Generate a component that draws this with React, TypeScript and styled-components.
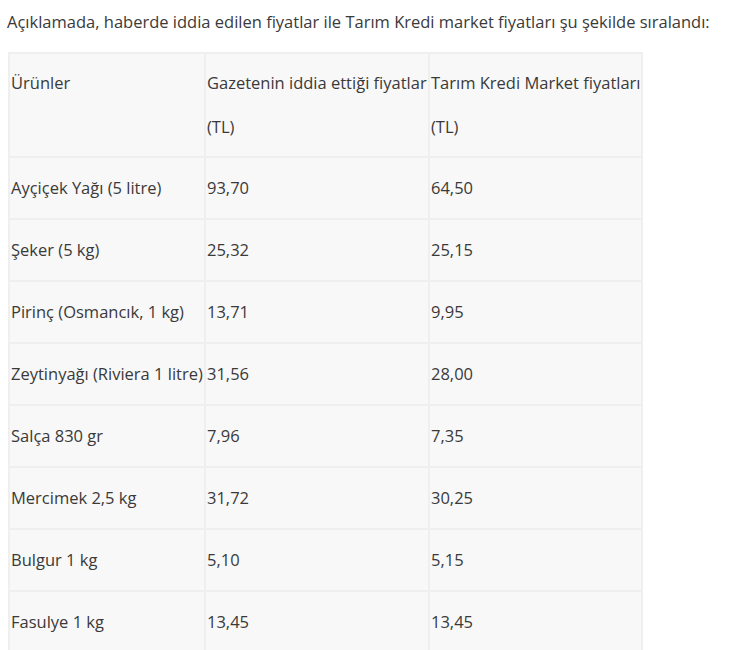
import React from "react";
import styled, { createGlobalStyle } from "styled-components";

const Global = createGlobalStyle`
  html, body { margin: 0; padding: 0; background: #fff; }
  body { font-family: "Open Sans", "Noto Sans", sans-serif; color: #3a3a3a; }
`;

const Page = styled.div`
  padding: 8px 0 0 7px;
`;

const Intro = styled.p`
  margin: 0 0 16px 0;
  font-size: 16.5px;
  line-height: 28px;
  font-weight: 400;
`;

const Table = styled.table`
  border-collapse: collapse;
  margin-left: 1px;
  font-size: 16.5px;
`;

const Cell = styled.td<{ $w?: number; $head?: boolean; $top?: boolean }>`
  background: #f8f8f8;
  border: 2px solid #efefef;
  padding: ${(p) => (p.$head ? "7px 0 7px 1px" : "8px 0 8px 1px")};
  line-height: 44px;
  vertical-align: ${(p) => (p.$top ? "top" : "middle")};
  white-space: nowrap;
  ${(p) => (p.$w ? `width: ${p.$w}px;` : "")}
`;

const HeadLine = styled.div`
  line-height: 44px;
`;

const rows: [string, string, string][] = [
  ["Ayçiçek Yağı (5 litre)", "93,70", "64,50"],
  ["Şeker (5 kg)", "25,32", "25,15"],
  ["Pirinç (Osmancık, 1 kg)", "13,71", "9,95"],
  ["Zeytinyağı (Riviera 1 litre)", "31,56", "28,00"],
  ["Salça 830 gr", "7,96", "7,35"],
  ["Mercimek 2,5 kg", "31,72", "30,25"],
  ["Bulgur 1 kg", "5,10", "5,15"],
  ["Fasulye 1 kg", "13,45", "13,45"],
];

export default function App() {
  return (
    <Page>
      <Global />
      <Intro>
        Açıklamada, haberde iddia edilen fiyatlar ile Tarım Kredi market fiyatları şu şekilde sıralandı:
      </Intro>
      <Table>
        <tbody>
          <tr>
            <Cell $w={193} $head $top>
              <HeadLine>Ürünler</HeadLine>
            </Cell>
            <Cell $w={221} $head>
              <HeadLine>Gazetenin iddia ettiği fiyatlar</HeadLine>
              <HeadLine>(TL)</HeadLine>
            </Cell>
            <Cell $w={207} $head>
              <HeadLine>Tarım Kredi Market fiyatları</HeadLine>
              <HeadLine>(TL)</HeadLine>
            </Cell>
          </tr>
          {rows.map((r) => (
            <tr key={r[0]}>
              <Cell>{r[0]}</Cell>
              <Cell>{r[1]}</Cell>
              <Cell>{r[2]}</Cell>
            </tr>
          ))}
        </tbody>
      </Table>
    </Page>
  );
}
